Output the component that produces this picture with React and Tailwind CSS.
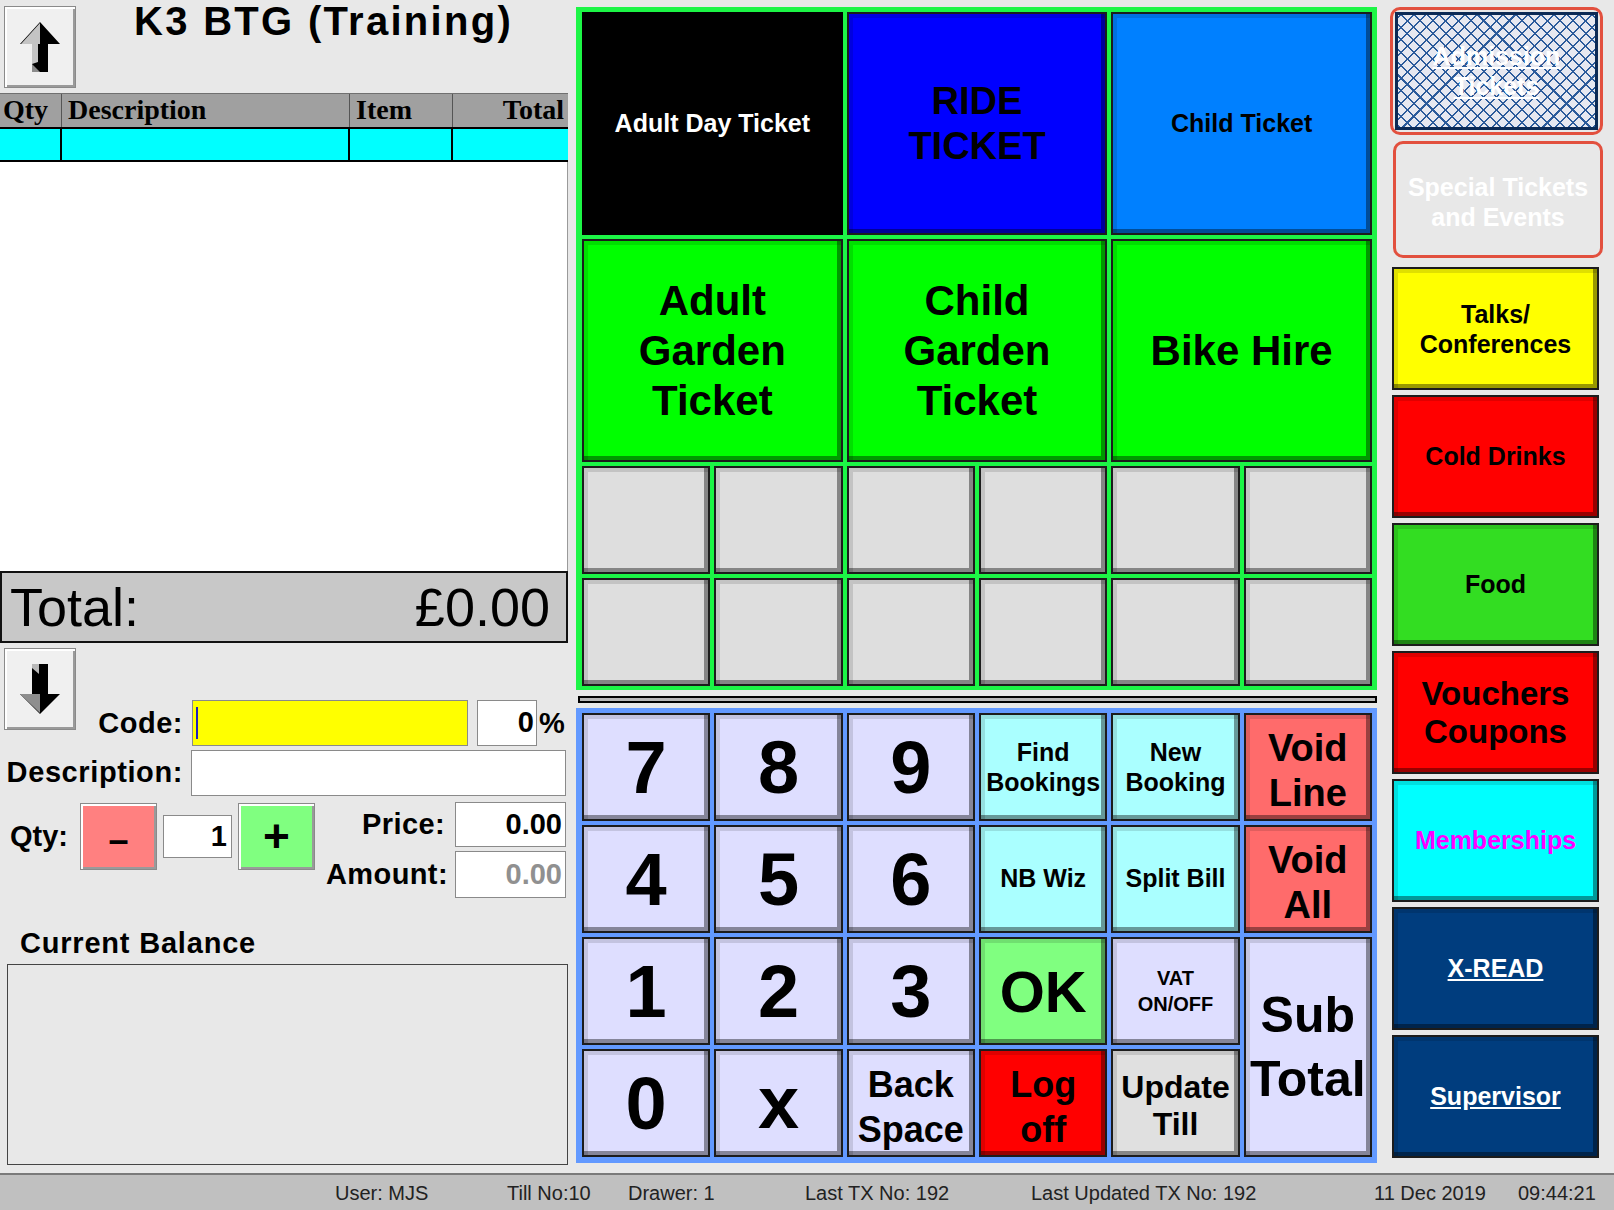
import React from 'react';

// shared 3D look of the till keys
const bevel =
  'border-2 border-[#1c1c1c] shadow-[inset_4px_4px_0_rgba(0,0,0,0.12),inset_-4px_-4px_0_rgba(0,0,0,0.4)]';

const lightBevel =
  'border border-[#8a8a8a] shadow-[inset_2px_2px_0_#ffffff,inset_-2px_-2px_0_#9a9a9a]';

function Key({ className = '', children }) {
  return (
    <div className={`flex items-center justify-center text-center font-bold text-black ${bevel} ${className}`}>
      {children}
    </div>
  );
}

function ArrowIcon({ down = false }) {
  if (down) {
    return (
      <svg width="40" height="50" viewBox="0 0 40 50">
        <polygon points="12,0 28,0 28,30 40,30 20,50 0,30 12,30" fill="#000" />
        <polygon points="12,0 19,0 19,10 12,4" fill="#b8b8b8" />
        <polygon points="0,30 12,30 20,30 20,49" fill="#8e8e8e" />
      </svg>
    );
  }
  return (
    <svg width="40" height="50" viewBox="0 0 40 50">
      <polygon points="20,0 40,22 28,22 28,50 12,50 12,22 0,22" fill="#000" />
      <polygon points="20,1 1,22 12,22 20,22" fill="#c4c4c4" />
      <polygon points="12,22 18,22 18,40 12,42" fill="#c4c4c4" />
      <polygon points="12,42 20,50 12,50" fill="#8c8c8c" />
    </svg>
  );
}

function ArrowButton({ down = false, className = '' }) {
  return (
    <div className={`flex h-[82px] w-[72px] items-center justify-center bg-[#f0f0f0] ${lightBevel} ${className}`}>
      <ArrowIcon down={down} />
    </div>
  );
}

function SideButton({ className = '', children }) {
  return (
    <div
      className={`flex h-[123px] w-[207px] items-center justify-center text-center font-bold ${bevel} ${className}`}
    >
      {children}
    </div>
  );
}

export default function App() {
  return (
    <div className="flex h-[1210px] w-[1614px] flex-col overflow-hidden bg-[#e8e8e8] font-['Liberation_Sans',Arial,sans-serif] text-black">
      <div className="flex h-[1173px]">
        {/* Left: receipt and item entry */}
        <div className="flex w-[568px] flex-col">
          <div className="flex h-[93px] items-start">
            <ArrowButton className="ml-[4px] mt-[6px]" />
            <h1 className="ml-[58px] mt-[1px] text-[40px] font-bold leading-none tracking-[2.3px]">K3 BTG (Training)</h1>
          </div>

          <div className="flex h-[34px] border-t border-[#707070] bg-[#a0a0a0] font-['Liberation_Serif',serif] text-[28px] font-bold leading-[32px]">
            <div className="w-[62px] border-r border-[#555] pl-[3px]">Qty</div>
            <div className="w-[288px] border-r border-[#555] pl-[6px]">Description</div>
            <div className="w-[103px] border-r border-[#555] pl-[6px]">Item</div>
            <div className="flex-1 pr-[4px] text-right">Total</div>
          </div>
          <div className="flex h-[35px] border-y-2 border-black bg-[#00ffff]">
            <div className="w-[62px] border-r-2 border-black" />
            <div className="w-[288px] border-r-2 border-black" />
            <div className="w-[103px] border-r-2 border-black" />
            <div className="flex-1" />
          </div>
          <div className="h-[409px] border-r border-[#9a9a9a] bg-white" />

          <div className="flex h-[72px] items-center justify-between border-2 border-[#111] bg-[#c8c8c8] pl-[8px] pr-[16px] text-[54px] leading-none">
            <span>Total:</span>
            <span>£0.00</span>
          </div>

          <div className="mt-[5px] flex h-[98px] items-end">
            <div className="flex h-full w-[183px] items-end">
              <ArrowButton down className="ml-[4px] self-start" />
              <span className="mb-[7px] ml-auto text-[29px] font-bold leading-[32px] tracking-[0.5px]">Code:</span>
            </div>
            <div className="ml-[9px] flex h-[46px] w-[276px] items-center border border-[#8a8a8a] bg-[#ffff00] pl-[3px]">
              <div className="h-[32px] w-[2px] bg-[#2020c0]" />
            </div>
            <div className="ml-[9px] flex h-[46px] w-[60px] items-center justify-end border border-[#8a8a8a] bg-white pr-[2px] text-[29px] font-bold">
              0
            </div>
            <span className="mb-[7px] ml-[2px] text-[29px] font-bold leading-[32px]">%</span>
          </div>

          <div className="mt-[4px] flex h-[46px] items-center">
            <span className="w-[183px] text-right text-[29px] font-bold tracking-[0.6px]">Description:</span>
            <div className="ml-[8px] h-[46px] w-[375px] border border-[#8a8a8a] bg-white" />
          </div>

          <div className="mt-[6px] flex h-[96px]">
            <div className="flex h-[69px] items-center">
              <span className="w-[70px] pl-[10px] text-[29px] font-bold">Qty:</span>
              <div className={`ml-[10px] flex h-[67px] w-[77px] items-center justify-center bg-[#ff8080] pt-[6px] text-[36px] font-bold ${lightBevel}`}>
                –
              </div>
              <div className="ml-[6px] flex h-[43px] w-[69px] items-center justify-end border border-[#8a8a8a] bg-white pr-[4px] text-[29px] font-bold">
                1
              </div>
              <div className={`ml-[6px] flex h-[67px] w-[77px] items-center justify-center bg-[#80ff80] text-[46px] font-bold ${lightBevel}`}>
                +
              </div>
            </div>
            <div className="ml-auto mr-[2px] flex flex-col items-end">
              <div className="flex h-[45px] items-center">
                <span className="text-[29px] font-bold tracking-[0.4px]">Price:</span>
                <div className="ml-[10px] flex h-[45px] w-[111px] items-center justify-end border border-[#8a8a8a] bg-white pr-[3px] text-[29px] font-bold">
                  0.00
                </div>
              </div>
              <div className="mt-[4px] flex h-[47px] items-center">
                <span className="mr-[-3px] text-[29px] font-bold tracking-[0.4px]">Amount:</span>
                <div className="ml-[10px] flex h-[47px] w-[111px] items-center justify-end border border-[#8a8a8a] bg-white pr-[3px] text-[29px] font-bold text-[#909090]">
                  0.00
                </div>
              </div>
            </div>
          </div>

          <div className="flex h-[66px] items-end pb-[6px] pl-[20px] text-[29px] font-bold leading-[30px] tracking-[0.8px]">
            Current Balance
          </div>
          <div className="ml-[7px] h-[201px] border border-[#444]" />
        </div>

        {/* Middle: product buttons and keypad */}
        <div className="ml-[8px] flex w-[801px] flex-col pt-[7px]">
          <div className="grid h-[683px] grid-cols-6 grid-rows-[223px_223px_108px_108px] gap-[4px] bg-[#1cf546] pb-[4px] pl-[6px] pr-[5px] pt-[5px]">
            <div className="col-span-2 flex items-center justify-center border-2 border-black bg-black text-[25px] font-bold text-white">
              Adult Day Ticket
            </div>
            <Key className="col-span-2 bg-[#0000ff] text-[38px] leading-[45px]">
              RIDE
              <br />
              TICKET
            </Key>
            <Key className="col-span-2 bg-[#0080ff] text-[25px]">Child Ticket</Key>

            <Key className="col-span-2 bg-[#00ff00] text-[42px] leading-[50px]">
              Adult
              <br />
              Garden
              <br />
              Ticket
            </Key>
            <Key className="col-span-2 bg-[#00ff00] text-[42px] leading-[50px]">
              Child
              <br />
              Garden
              <br />
              Ticket
            </Key>
            <Key className="col-span-2 bg-[#00ff00] text-[42px] leading-[50px]">Bike Hire</Key>

            {Array.from({ length: 12 }).map((_, i) => (
              <Key key={i} className="bg-[#dedede]" />
            ))}
          </div>

          <div className="ml-[2px] mt-[6px] h-[7px] border-2 border-black bg-[#b8b8b8]" />

          <div className="mt-[5px] grid h-[455px] grid-cols-6 grid-rows-[108px_108px_108px_108px] gap-[4px] bg-[#6299ff] pl-[6px] pr-[5px] pt-[5px]">
            <Key className="bg-[#dedeff] text-[74px]">7</Key>
            <Key className="bg-[#dedeff] text-[74px]">8</Key>
            <Key className="bg-[#dedeff] text-[74px]">9</Key>
            <Key className="bg-[#aaffff] text-[25px] leading-[30px]">
              Find
              <br />
              Bookings
            </Key>
            <Key className="bg-[#aaffff] text-[25px] leading-[30px]">
              New
              <br />
              Booking
            </Key>
            <Key className="bg-[#ff6b6b] pt-[8px] text-[38px] leading-[45px]">
              Void
              <br />
              Line
            </Key>

            <Key className="bg-[#dedeff] text-[74px]">4</Key>
            <Key className="bg-[#dedeff] text-[74px]">5</Key>
            <Key className="bg-[#dedeff] text-[74px]">6</Key>
            <Key className="bg-[#aaffff] text-[25px]">NB Wiz</Key>
            <Key className="bg-[#aaffff] text-[25px]">Split Bill</Key>
            <Key className="bg-[#ff6b6b] pt-[8px] text-[38px] leading-[45px]">
              Void
              <br />
              All
            </Key>

            <Key className="bg-[#dedeff] text-[74px]">1</Key>
            <Key className="bg-[#dedeff] text-[74px]">2</Key>
            <Key className="bg-[#dedeff] text-[74px]">3</Key>
            <Key className="bg-[#80ff80] text-[58px]">OK</Key>
            <Key className="bg-[#dedeff] text-[20px] leading-[26px]">
              VAT
              <br />
              ON/OFF
            </Key>
            <Key className="row-span-2 bg-[#dedeff] text-[50px] leading-[64px]">
              Sub
              <br />
              Total
            </Key>

            <Key className="bg-[#dedeff] text-[74px]">0</Key>
            <Key className="bg-[#dedeff] text-[74px] leading-none">x</Key>
            <Key className="bg-[#dedeff] pt-[8px] text-[36px] leading-[45px]">
              Back
              <br />
              Space
            </Key>
            <Key className="bg-[#ff0000] pt-[8px] text-[36px] leading-[45px]">
              Log
              <br />
              off
            </Key>
            <Key className="bg-[#e0e0e0] pt-[6px] text-[32px] leading-[37px]">
              Update
              <br />
              Till
            </Key>
          </div>
        </div>

        {/* Right: department buttons */}
        <div className="ml-[13px] flex w-[213px] flex-col pt-[7px]">
          <div className="h-[128px] rounded-[10px] border-[3px] border-[#e2503e] p-[2px]">
            <div className="flex h-full items-center justify-center border-[3px] border-[#0b2a55] bg-[#e6e8f0] bg-[repeating-linear-gradient(45deg,#2b5b9b_0px,#2b5b9b_1.5px,transparent_1.5px,transparent_9px),repeating-linear-gradient(-45deg,#2b5b9b_0px,#2b5b9b_1.5px,transparent_1.5px,transparent_9px)] text-center text-[25px] font-bold leading-[30px] text-white underline">
              Admission
              <br />
              Tickets
            </div>
          </div>
          <div className="ml-[3px] mt-[6px] flex h-[117px] items-center justify-center rounded-[10px] border-[3px] border-[#e2503e] pt-[4px] text-center text-[25px] font-bold leading-[30px] text-white">
            Special Tickets
            <br />
            and Events
          </div>

          <div className="ml-[2px] mt-[9px] flex flex-col gap-[5px]">
            <SideButton className="bg-[#ffff00] text-[25px] leading-[30px]">
              Talks/
              <br />
              Conferences
            </SideButton>
            <SideButton className="bg-[#ff0000] text-[25px]">Cold Drinks</SideButton>
            <SideButton className="bg-[#33dd22] text-[25px]">Food</SideButton>
            <SideButton className="bg-[#ff0000] text-[33px] leading-[38px]">
              Vouchers
              <br />
              Coupons
            </SideButton>
            <SideButton className="bg-[#00ffff] text-[25px] text-[#ff00ff]">Memberships</SideButton>
            <SideButton className="bg-[#003d7e] text-[25px] text-white underline">X-READ</SideButton>
            <SideButton className="bg-[#003d7e] text-[25px] text-white underline">Supervisor</SideButton>
          </div>
        </div>
      </div>

      {/* Status bar */}
      <div className="flex h-[37px] items-center border-t-2 border-[#7a7a7a] bg-[#c0c0c0] pl-[335px] text-[20px] text-[#222]">
        <span className="w-[172px]">User: MJS</span>
        <span className="w-[121px]">Till No:10</span>
        <span className="w-[177px]">Drawer: 1</span>
        <span className="w-[226px]">Last TX No: 192</span>
        <span className="w-[343px]">Last Updated TX No: 192</span>
        <span className="w-[144px]">11 Dec 2019</span>
        <span>09:44:21</span>
      </div>
    </div>
  );
}
